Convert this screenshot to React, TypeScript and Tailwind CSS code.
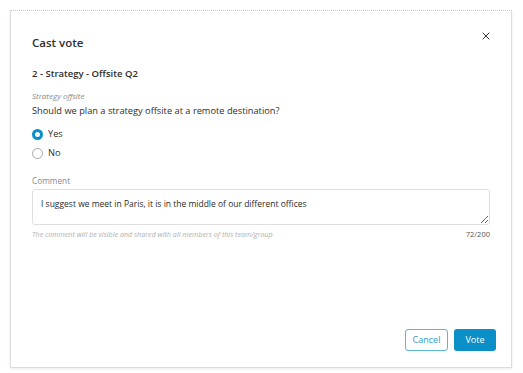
import { X } from "lucide-react";

function Radio({ label, checked }: { label: string; checked?: boolean }) {
  return (
    <label className="flex items-center h-[14px] gap-[5px] text-[9.25px] text-[#2e2e2e]">
      {checked ? (
        <span className="w-[11px] h-[11px] rounded-full border-[3.5px] border-[#0b8fc7] bg-white" />
      ) : (
        <span className="w-[11px] h-[11px] rounded-full border border-[#a8a8a8] bg-white" />
      )}
      {label}
    </label>
  );
}

export default function App() {
  return (
    <div
      className="w-[523px] h-[373px] bg-white pt-[10px] pl-[10px] pr-[11px] pb-[5px]"
      style={{ fontFamily: '"Open Sans", "Noto Sans", sans-serif' }}
    >
      <div className="h-[358px] flex flex-col bg-white border border-[#dcdcdc] border-t-[#c8c8c8] [border-top-style:dotted] shadow-[0_1px_3px_rgba(0,0,0,0.08)]">
        <div className="pl-[21px] pr-[21px] flex flex-col">
          <div className="flex items-start justify-between mt-[24px]">
            <h2 className="h-[16px] leading-[16px] text-[11.5px] font-semibold text-[#2e2e2e]">
              Cast vote
            </h2>
            <button className="mt-[-5px] mr-[-2px] text-[#333]">
              <X className="w-[12px] h-[12px]" strokeWidth={2} />
            </button>
          </div>
          <h3 className="mt-[16px] h-[14px] leading-[14px] text-[9.5px] font-semibold text-[#2e2e2e]">
            2 - Strategy - Offsite Q2
          </h3>
          <p className="mt-[9px] h-[12px] leading-[12px] text-[8px] italic text-[#8a8a8a]">
            Strategy offsite
          </p>
          <p className="mt-[2px] h-[14px] leading-[14px] text-[9.25px] text-[#2e2e2e]">
            Should we plan a strategy offsite at a remote destination?
          </p>
          <div className="mt-[9px] flex flex-col gap-[5px]">
            <Radio label="Yes" checked />
            <Radio label="No" />
          </div>
          <p className="mt-[15px] h-[12px] leading-[12px] text-[8.25px] text-[#8a8a8a]">
            Comment
          </p>
          <textarea
            readOnly
            defaultValue="I suggest we meet in Paris, it is in the middle of our different offices"
            className="mt-[2px] h-[36px] w-full rounded-[3px] border border-[#dedede] px-[8px] pt-[8px] text-[8.5px] leading-[12px] text-[#2a2a2a] outline-none"
          />
          <div className="mt-[4px] h-[10px] leading-[10px] flex justify-between items-center">
            <span className="text-[7.15px] italic text-[#b0b0b0]">
              The comment will be visible and shared with all members of this team/group
            </span>
            <span className="text-[7.5px] text-[#555]">72/200</span>
          </div>
        </div>
        <div className="mt-auto pb-[16px] pr-[15px] flex justify-end gap-[6px]">
          <button className="h-[22px] w-[43px] rounded-[3px] border border-[#5ab6dc] bg-white text-[9px] text-[#2f9bcc]">
            Cancel
          </button>
          <button className="h-[22px] w-[42px] rounded-[3px] bg-[#0b8fc7] text-[9px] text-white">
            Vote
          </button>
        </div>
      </div>
    </div>
  );
}
